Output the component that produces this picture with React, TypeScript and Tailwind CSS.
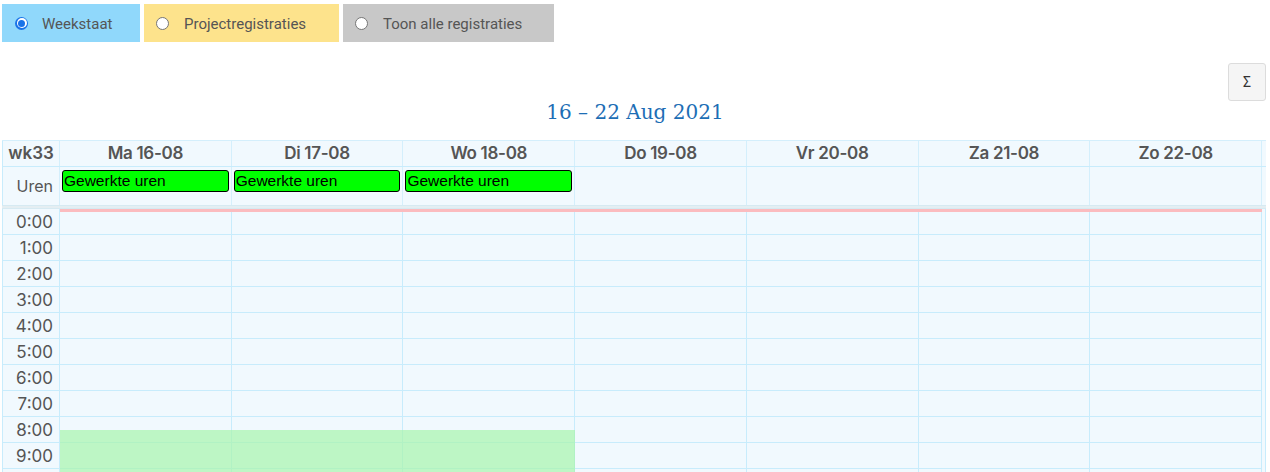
import React from "react";

const days = ["Ma 16-08", "Di 17-08", "Wo 18-08", "Do 19-08", "Vr 20-08", "Za 21-08", "Zo 22-08"];
const hours = Array.from({ length: 10 }, (_, i) => `${i}:00`);

function Radio({ checked }: { checked?: boolean }) {
  if (checked) {
    return (
      <span className="inline-flex h-[13px] w-[13px] items-center justify-center rounded-full bg-[#1a73e8]">
        <span className="inline-flex h-[10px] w-[10px] items-center justify-center rounded-full bg-white">
          <span className="h-[7px] w-[7px] rounded-full bg-[#1a73e8]" />
        </span>
      </span>
    );
  }
  return <span className="inline-block h-[13px] w-[13px] rounded-full border border-[#767676] bg-white" />;
}

export default function App() {
  const font = { fontFamily: "Roboto, 'Noto Sans', sans-serif" };
  const inter = { fontFamily: "Inter, sans-serif" };
  return (
    <div className="h-[472px] w-[1270px] overflow-hidden bg-white" style={font}>
      {/* Tabs */}
      <div className="flex gap-[4px] pl-[2px] pt-[4px]">
        <div className="flex h-[38px] w-[138px] items-center bg-[#90d8fb] pl-[13px] text-[15px] text-[#555]">
          <Radio checked />
          <span className="ml-[14px] pt-[3px]">Weekstaat</span>
        </div>
        <div className="flex h-[38px] w-[195px] items-center bg-[#fde38c] pl-[12px] text-[15px] text-[#555]">
          <Radio />
          <span className="ml-[15px] pt-[3px]">Projectregistraties</span>
        </div>
        <div className="flex h-[38px] w-[211px] items-center bg-[#c8c8c8] pl-[12px] text-[15px] text-[#555]">
          <Radio />
          <span className="ml-[15px] pt-[3px]">Toon alle registraties</span>
        </div>
      </div>

      {/* Sigma button */}
      <div className="flex justify-end pr-[4px] pt-[21px]">
        <div className="flex h-[38px] w-[38px] items-center justify-center rounded-[3px] border border-[#dcdcdc] bg-[#f5f5f5] text-[14px] text-[#333]">
          Σ
        </div>
      </div>

      {/* Title */}
      <div
        className="-mt-[2px] text-center text-[20px] leading-[26px] text-[#1d6eb5]"
        style={{ fontFamily: "'DejaVu Serif', serif" }}
      >
        16 – 22 Aug 2021
      </div>

      {/* Calendar */}
      <div className="ml-[2px] mt-[15px] w-[1264px] border-t border-[#d4effc] bg-[#f1f9fe]">
        {/* header */}
        <div className="grid grid-cols-[57px_repeat(7,1fr)] border-l border-[#c8ecfc] pr-[4px]">
          <div
            className="flex h-[25px] items-center justify-center border-r border-[#d4effc] text-[17px] font-semibold text-[#555]"
            style={inter}
          >
            wk33
          </div>
          {days.map((d) => (
            <div
              key={d}
              className="flex h-[25px] items-center justify-center border-r border-[#d4effc] text-[17px] font-semibold tracking-[-0.3px] text-[#555]"
              style={inter}
            >
              {d}
            </div>
          ))}
        </div>
        {/* Uren row */}
        <div className="grid grid-cols-[57px_repeat(7,1fr)] border-l border-t border-[#c8ecfc] pr-[4px]">
          <div className="flex h-[38px] items-center justify-end border-r border-[#d4effc] pr-[6px] text-[16px] text-[#555]" style={inter}>
            Uren
          </div>
          {days.map((d, i) => (
            <div key={d} className="h-[38px] border-r border-[#d4effc] px-[2px] pt-[3px]">
              {i < 3 ? (
                <div
                  className="flex h-[22px] items-center rounded-[3px] border border-black bg-[#00ff00] pl-[1px] text-[15.5px] text-black"
                  style={{ fontFamily: "'Liberation Sans', Arial, sans-serif" }}
                >
                  Gewerkte uren
                </div>
              ) : null}
            </div>
          ))}
        </div>
        {/* separator band */}
        <div className="h-[4px] border-y border-[#d6eaf2] bg-[#e4eef2]" />
        {/* hour rows */}
        <div className="relative grid grid-cols-[57px_1fr] border-l border-[#c8ecfc]">
          <div className="border-r border-[#c8ecfc]">
            {hours.map((h) => (
              <div
                key={h}
                className="flex h-[26px] items-center justify-end border-b border-[#c8ecfc] pr-[6px] pt-[2px] text-[17px] text-[#555]"
                style={inter}
              >
                {h}
              </div>
            ))}
            <div className="h-[26px] border-b border-[#c8ecfc]" />
          </div>
          <div className="relative pr-[4px]">
            <div className="grid grid-cols-7">
              {days.map((d, i) => (
                <div key={d} className="relative border-r border-[#c8ecfc]">
                  {hours.map((h) => (
                    <div key={h} className="h-[26px] border-b border-[#c8ecfc]" />
                  ))}
                  <div className="h-[26px] border-b border-[#c8ecfc]" />
                  {i < 3 ? (
                    <div className="absolute left-0 right-[-1px] top-[221px] h-[100px] bg-[#a6f5ad]/70" />
                  ) : null}
                </div>
              ))}
            </div>
            <div className="absolute left-0 right-[4px] top-0 h-[3px] bg-[#fbbcbf]" />
            <div className="absolute right-0 top-0 h-full w-[4px] border-r border-[#c8ecfc]" />
          </div>
        </div>
      </div>
    </div>
  );
}
